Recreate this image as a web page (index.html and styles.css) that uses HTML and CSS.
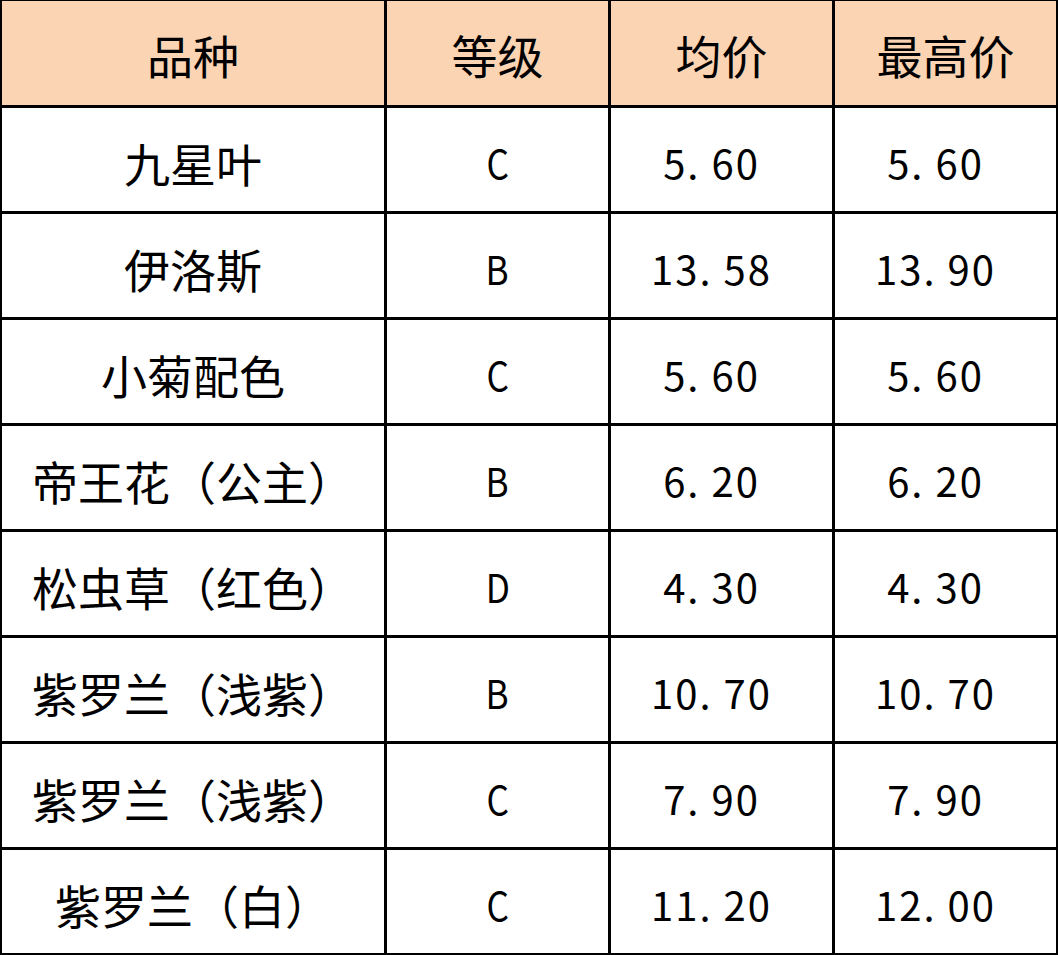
FILE: index.html
```html
<!DOCTYPE html>
<html lang="zh-CN">
<head>
<meta charset="utf-8">
<title>价格表</title>
<link rel="stylesheet" href="styles.css">
</head>
<body>
<div class="sheet">
  <div class="cell head">品种</div>
  <div class="cell head">等级</div>
  <div class="cell head">均价</div>
  <div class="cell head">最高价</div>

  <div class="cell name">九星叶</div>
  <div class="cell grade"><span class="letter">C</span></div>
  <div class="cell num">5. 60</div>
  <div class="cell num">5. 60</div>

  <div class="cell name">伊洛斯</div>
  <div class="cell grade"><span class="letter">B</span></div>
  <div class="cell num">13. 58</div>
  <div class="cell num">13. 90</div>

  <div class="cell name">小菊配色</div>
  <div class="cell grade"><span class="letter">C</span></div>
  <div class="cell num">5. 60</div>
  <div class="cell num">5. 60</div>

  <div class="cell name">帝王花（公主）</div>
  <div class="cell grade"><span class="letter">B</span></div>
  <div class="cell num">6. 20</div>
  <div class="cell num">6. 20</div>

  <div class="cell name">松虫草（红色）</div>
  <div class="cell grade"><span class="letter">D</span></div>
  <div class="cell num">4. 30</div>
  <div class="cell num">4. 30</div>

  <div class="cell name">紫罗兰（浅紫）</div>
  <div class="cell grade"><span class="letter">B</span></div>
  <div class="cell num">10. 70</div>
  <div class="cell num">10. 70</div>

  <div class="cell name">紫罗兰（浅紫）</div>
  <div class="cell grade"><span class="letter">C</span></div>
  <div class="cell num">7. 90</div>
  <div class="cell num">7. 90</div>

  <div class="cell name">紫罗兰（白）</div>
  <div class="cell grade"><span class="letter">C</span></div>
  <div class="cell num">11. 20</div>
  <div class="cell num">12. 00</div>
</div>
</body>
</html>
```
FILE: styles.css
```css
html, body {
  margin: 0;
  padding: 0;
  background: #ffffff;
}

body {
  width: 1058px;
  height: 955px;
  overflow: hidden;
  font-family: "Noto Sans CJK SC", "Noto Sans", sans-serif;
  color: #000000;
}

.sheet {
  display: grid;
  grid-template-columns: 382px 221px 221px 221px;
  grid-template-rows: 104px repeat(8, 103px);
  gap: 3px;
  padding: 1px 2px 2px 2px;
  background: #000000;
  width: 1058px;
  height: 955px;
  box-sizing: border-box;
}

.cell {
  background: #ffffff;
  display: flex;
  align-items: center;
  justify-content: center;
  white-space: nowrap;
  line-height: 1;
}

.head {
  background: #fbd4b4;
  font-size: 46px;
  padding-top: 2px;
}

.name {
  font-size: 46px;
  padding-top: 4px;
}

.grade {
  font-size: 40px;
  padding-top: 4px;
}

.letter {
  display: inline-block;
  transform: scaleX(0.88);
}

.num {
  font-size: 40px;
  letter-spacing: 2px;
  padding-top: 4px;
  padding-right: 20px;
}
```
